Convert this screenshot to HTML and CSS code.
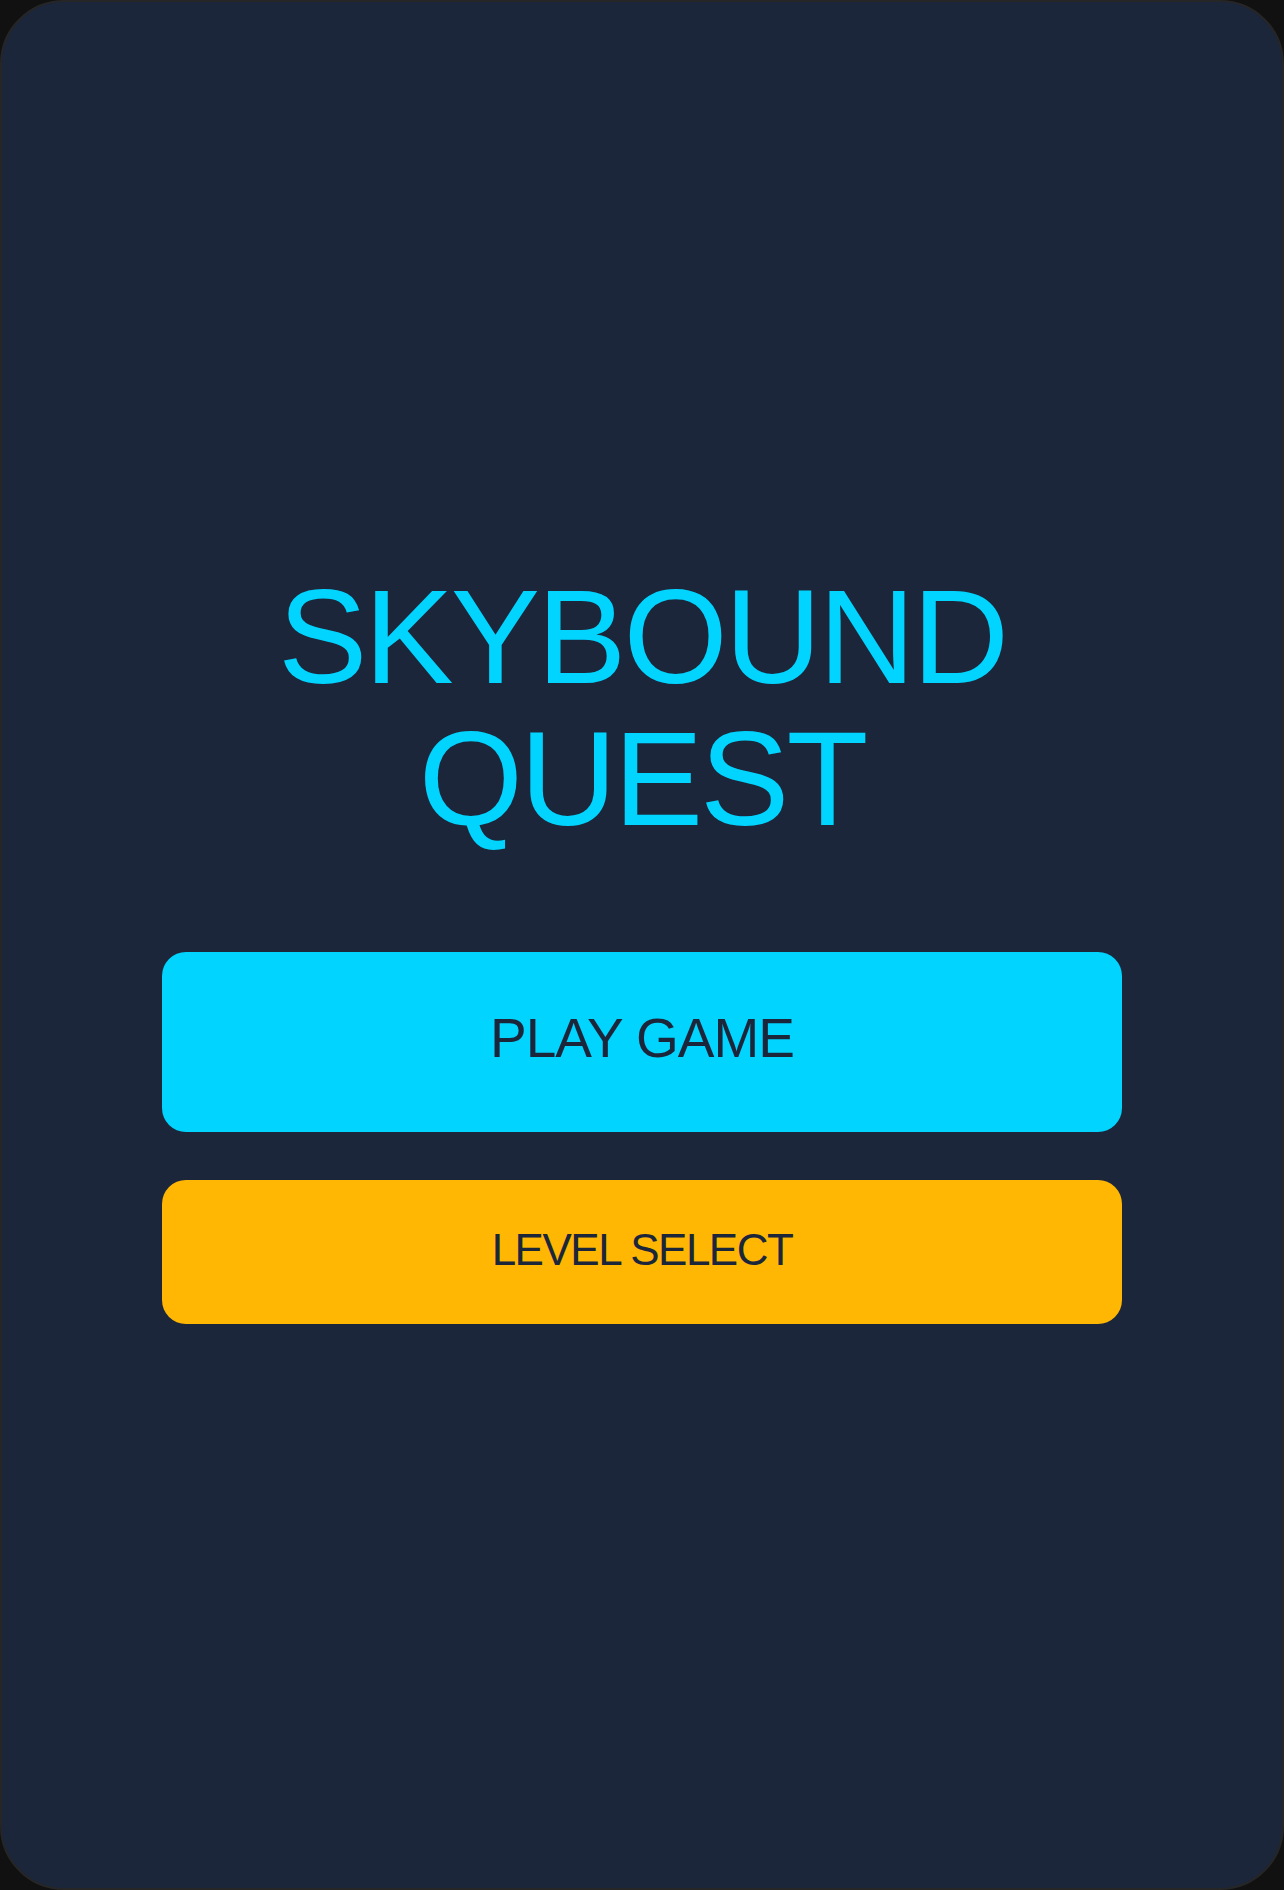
FILE: index.html
```html
<!DOCTYPE html>
<html lang="en">
<head>
<meta charset="utf-8">
<title>Skybound Quest</title>
<link rel="stylesheet" href="styles.css">
</head>
<body>
  <main class="screen">
    <h1 class="title">SKYBOUND<br>QUEST</h1>
    <div class="menu">
      <button class="btn btn-play">PLAY GAME</button>
      <button class="btn btn-level">LEVEL SELECT</button>
    </div>
  </main>
</body>
</html>
```

FILE: styles.css
```css
html, body {
  margin: 0;
  padding: 0;
  background: #111111;
}

body {
  width: 1284px;
  height: 1890px;
  font-family: "Liberation Sans", Arial, sans-serif;
}

.screen {
  box-sizing: border-box;
  width: 1284px;
  height: 1890px;
  background: #1b263b;
  border: 2px solid #262626;
  border-radius: 64px;
  display: flex;
  flex-direction: column;
  align-items: center;
  justify-content: center;
}

.title {
  margin: 0 0 102px 0;
  font-family: "Liberation Sans", Arial, sans-serif;
  font-weight: 400;
  font-size: 134px;
  line-height: 142px;
  letter-spacing: -3px;
  color: #00d4ff;
  text-align: center;
}

.menu {
  width: 960px;
  display: flex;
  flex-direction: column;
  gap: 48px;
}

.btn {
  box-sizing: border-box;
  border: none;
  border-radius: 24px;
  color: #1b263b;
  font-family: "Liberation Sans", Arial, sans-serif;
  font-weight: 400;
  text-align: center;
  padding: 0;
  width: 100%;
}

.btn-play {
  height: 180px;
  padding-bottom: 8px;
  background: #00d4ff;
  font-size: 55px;
  letter-spacing: -1px;
}

.btn-level {
  height: 144px;
  padding-bottom: 4px;
  background: #ffb703;
  font-size: 44px;
  letter-spacing: -1.5px;
}
```
